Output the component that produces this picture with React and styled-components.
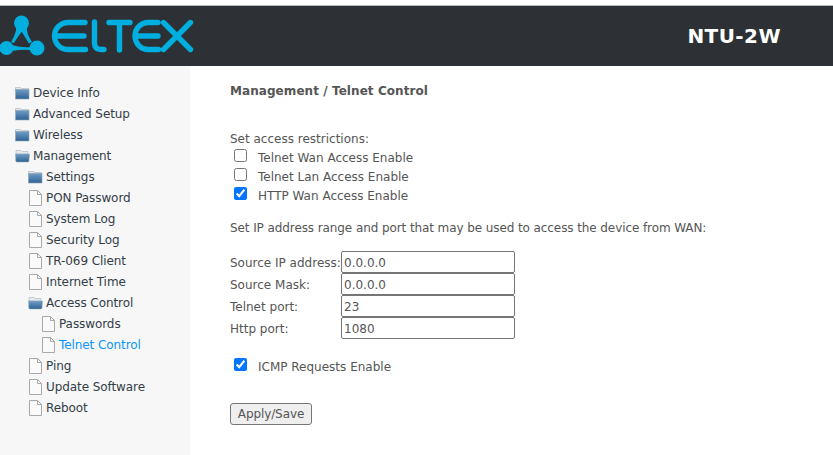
import React from 'react';
import styled, { createGlobalStyle } from 'styled-components';

const GlobalStyle = createGlobalStyle`
  html, body {
    margin: 0;
    height: 100%;
    background: #fff;
    overflow: hidden;
  }
  #root {
    height: 100%;
  }
`;

const Page = styled.div`
  height: 455px;
  display: flex;
  flex-direction: column;
  font-family: 'DejaVu Sans', Verdana, sans-serif;
  font-size: 12px;
  color: #555;
`;

const TopStrip = styled.div`
  height: 5px;
  background: #fff;
  border-bottom: 1px solid #bbb;
`;

const Banner = styled.header`
  height: 60px;
  flex: none;
  background: #2d3135;
  display: flex;
  align-items: center;
  justify-content: space-between;
  padding-right: 52px;
`;

const LogoSvg = styled.svg`
  display: block;
  width: 196px;
  height: 60px;
`;

const Model = styled.div`
  font-size: 20px;
  font-weight: bold;
  letter-spacing: 0.45px;
  color: #fff;
`;

const Body = styled.div`
  flex: 1;
  display: flex;
  min-height: 0;
`;

const Sidebar = styled.nav`
  width: 190px;
  flex: none;
  background: #f7f7f7;
  padding-top: 16px;
  box-sizing: border-box;
`;

const TreeRow = styled.div`
  height: 21px;
  display: flex;
  align-items: center;
  padding-left: ${(p) => 15 + p.$level * 13}px;
  color: ${(p) => (p.$active ? '#0a95ff' : '#333d47')};
  letter-spacing: -0.08px;
  white-space: nowrap;
`;

const TreeIcon = styled.svg`
  width: 16px;
  height: 16px;
  flex: none;
  margin-right: 2px;
`;

const Main = styled.main`
  flex: 1;
  padding: 17px 0 0 40px;
`;

const Title = styled.h1`
  margin: 0 0 32px;
  font-size: 12px;
  line-height: 17px;
  font-weight: bold;
  letter-spacing: 0.07px;
  color: #555;
`;

const Text = styled.div`
  line-height: 15px;
  margin-top: ${(p) => p.$top || 0}px;
  letter-spacing: ${(p) => (p.$tight ? '-0.09px' : '0')};
`;

const CheckList = styled.div`
  margin-top: 1px;
  display: flex;
  flex-direction: column;
`;

const CheckRow = styled.label`
  height: 19px;
  display: flex;
  align-items: center;
  padding-left: 4px;
`;

const Check = styled.input.attrs({ type: 'checkbox' })`
  width: 13px;
  height: 13px;
  margin: 0 11px 4px 0;
  accent-color: #0075ff;
`;

const IpForm = styled.div`
  margin-top: 15px;
  display: grid;
  grid-template-columns: 111px 174px;
  align-items: center;
`;

const FieldLabel = styled.span`
  padding-top: 2px;
  white-space: nowrap;
`;

const Field = styled.input`
  box-sizing: border-box;
  width: 174px;
  height: 22px;
  padding: 1px 2px 0;
  border: 1px solid #767676;
  border-radius: 2px;
  font: inherit;
  color: #555;
  background: #fff;
`;

const IcmpRow = styled(CheckRow)`
  margin-top: 18px;
`;

const ApplyButton = styled.button`
  display: block;
  margin-top: 27px;
  width: 82px;
  height: 22px;
  padding: 0;
  font: inherit;
  letter-spacing: -0.1px;
  color: #555;
  background: #efefef;
  border: 1px solid #767676;
  border-radius: 3px;
`;

const FolderIcon = () => (
  <TreeIcon viewBox="0 0 16 16">
    <defs>
      <linearGradient id="folderFill" x1="0" y1="0" x2="0" y2="1">
        <stop offset="0" stopColor="#6f9cc6" />
        <stop offset="1" stopColor="#2f6293" />
      </linearGradient>
    </defs>
    <path d="M0.5 2.5 L5.5 2.5 L6.5 3.5 L13.5 3.5 L13.5 5 L0.5 5 Z" fill="#dfe5ea" stroke="#a9b2ba" strokeWidth="0.6" />
    <rect x="0.5" y="4.5" width="13.5" height="9.5" fill="url(#folderFill)" stroke="#8ea4b8" strokeWidth="0.6" />
  </TreeIcon>
);

const OpenFolderIcon = () => (
  <TreeIcon viewBox="0 0 16 16">
    <path d="M1 2.5 L6 2.5 L7 3.5 L13 3.5 L13 6 L1 6 Z" fill="#e6eaee" stroke="#a9b2ba" strokeWidth="0.6" />
    <path d="M0.5 6 L14.5 6 L14 13 Q13.8 14 13 14 L2 14 Q1 14 0.8 13 Z" fill="url(#folderFill)" stroke="#8ea4b8" strokeWidth="0.5" />
  </TreeIcon>
);

const PageIcon = () => (
  <TreeIcon viewBox="0 0 16 16">
    <path d="M1.5 0.5 L9.5 0.5 L13.5 4.5 L13.5 15.5 L1.5 15.5 Z" fill="#fafafa" stroke="#a8a8a8" />
    <path d="M9.5 0.5 L9.5 4.5 L13.5 4.5" fill="none" stroke="#a8a8a8" />
  </TreeIcon>
);

const Logo = () => (
  <LogoSvg viewBox="0 0 196 60">
    <g fill="#00aee0">
      <circle cx="21.5" cy="17" r="7.5" />
      <circle cx="6.5" cy="42" r="7" />
      <circle cx="37" cy="42" r="7.5" />
      <path d="M16 21 Q17 26 11 36 L14 37 Q18 30 24 23 Z" />
      <path d="M27 21 Q26 27 32 36 L29 37.5 Q25 31 20 23 Z" />
      <path d="M12 39 Q22 42 31 41 L31 44 Q22 43 12 45 Z" />
    </g>
    <g fill="none" stroke="#00aee0" strokeWidth="5.4" strokeLinecap="round" strokeLinejoin="round">
      <path d="M85 16.5 H68 A13.5 13.5 0 0 0 68 43.5 H85.5 M55 30 H84" />
      <path d="M94.5 16 V37 Q94.5 43.5 101 43.5 H104" />
      <path d="M109 16.5 H130 M119.5 16.5 V44" />
      <path d="M158 16.5 H148 A13 13.5 0 0 0 148 43.5 H158.5 M136 30 H158" />
      <path d="M163.5 16.5 L190.5 43.5 M190.5 16.5 L163.5 43.5" />
    </g>
  </LogoSvg>
);

const tree = [
  { label: 'Device Info', level: 0, icon: 'folder' },
  { label: 'Advanced Setup', level: 0, icon: 'folder' },
  { label: 'Wireless', level: 0, icon: 'folder' },
  { label: 'Management', level: 0, icon: 'open' },
  { label: 'Settings', level: 1, icon: 'folder' },
  { label: 'PON Password', level: 1, icon: 'page' },
  { label: 'System Log', level: 1, icon: 'page' },
  { label: 'Security Log', level: 1, icon: 'page' },
  { label: 'TR-069 Client', level: 1, icon: 'page' },
  { label: 'Internet Time', level: 1, icon: 'page' },
  { label: 'Access Control', level: 1, icon: 'open' },
  { label: 'Passwords', level: 2, icon: 'page' },
  { label: 'Telnet Control', level: 2, icon: 'page', active: true },
  { label: 'Ping', level: 1, icon: 'page' },
  { label: 'Update Software', level: 1, icon: 'page' },
  { label: 'Reboot', level: 1, icon: 'page' },
];

const icons = { folder: FolderIcon, open: OpenFolderIcon, page: PageIcon };

const fields = [
  { label: 'Source IP address:', value: '0.0.0.0' },
  { label: 'Source Mask:', value: '0.0.0.0' },
  { label: 'Telnet port:', value: '23' },
  { label: 'Http port:', value: '1080' },
];

const App = () => (
  <>
    <GlobalStyle />
    <Page>
      <TopStrip />
      <Banner>
        <Logo />
        <Model>NTU-2W</Model>
      </Banner>
      <Body>
        <Sidebar>
          {tree.map((item) => {
            const Icon = icons[item.icon];
            return (
              <TreeRow key={item.label} $level={item.level} $active={item.active}>
                <Icon />
                {item.label}
              </TreeRow>
            );
          })}
        </Sidebar>
        <Main>
          <Title>Management / Telnet Control</Title>
          <Text>Set access restrictions:</Text>
          <CheckList>
            <CheckRow><Check />Telnet Wan Access Enable</CheckRow>
            <CheckRow><Check />Telnet Lan Access Enable</CheckRow>
            <CheckRow><Check defaultChecked />HTTP Wan Access Enable</CheckRow>
          </CheckList>
          <Text $top={16} $tight>Set IP address range and port that may be used to access the device from WAN:</Text>
          <IpForm>
            {fields.map((f) => (
              <React.Fragment key={f.label}>
                <FieldLabel>{f.label}</FieldLabel>
                <Field defaultValue={f.value} />
              </React.Fragment>
            ))}
          </IpForm>
          <IcmpRow><Check defaultChecked />ICMP Requests Enable</IcmpRow>
          <ApplyButton>Apply/Save</ApplyButton>
        </Main>
      </Body>
    </Page>
  </>
);

export default App;
